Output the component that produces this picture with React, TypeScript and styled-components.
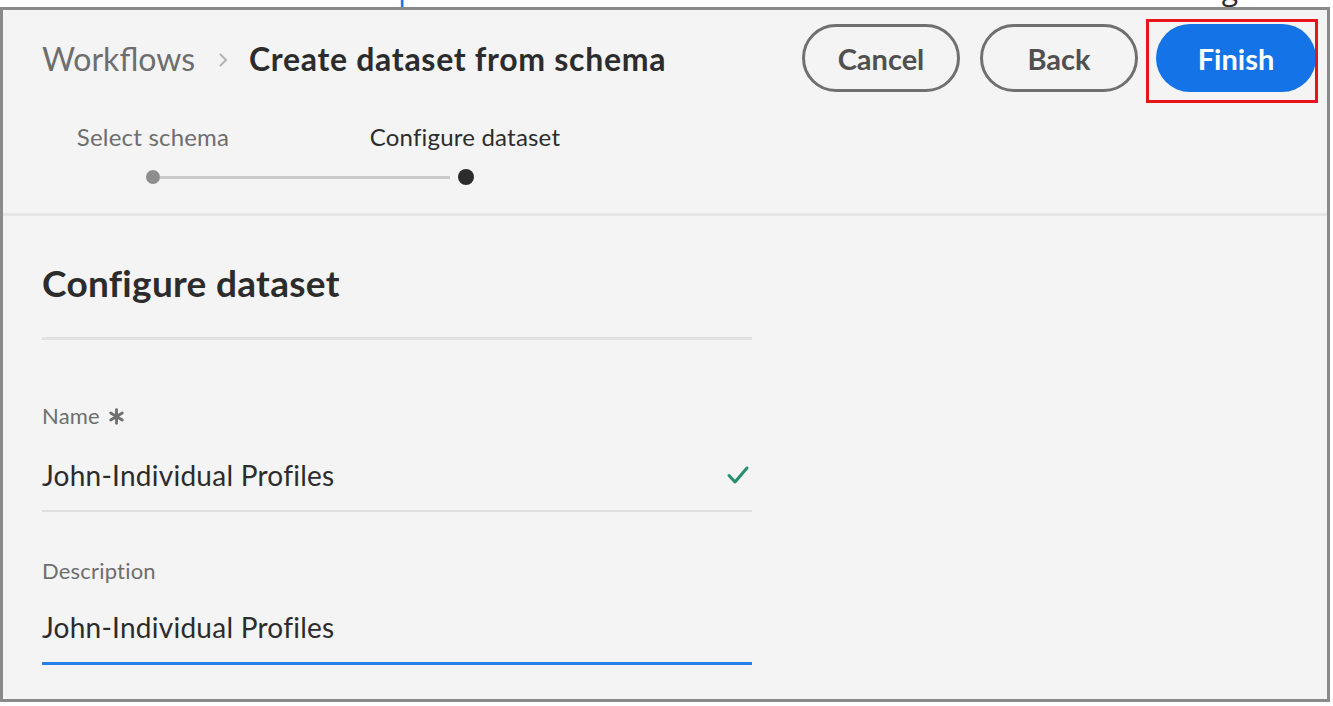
import styled, { createGlobalStyle } from "styled-components";

const GlobalStyle = createGlobalStyle`
  html, body {
    margin: 0;
    padding: 0;
    background: #ffffff;
  }
  body {
    font-family: Lato, "Open Sans", "Liberation Sans", sans-serif;
    color: #2c2c2c;
  }
`;

export default function App() {
  return (
    <>
      <GlobalStyle />
      <Page>
        <CaptionStrip>
          <CaptionText $color="#1473e6" $offset={338}>
            setup
          </CaptionText>
          <CaptionText $color="#2c2c2c" $offset={0} $right={95}>
            dialog
          </CaptionText>
        </CaptionStrip>
        <Frame>
          <Header>
            <Toolbar>
              <Breadcrumbs>
                <Crumb>Workflows</Crumb>
                <Chevron viewBox="0 0 10 16" aria-hidden>
                  <path d="M2 2l6 6-6 6" />
                </Chevron>
                <CurrentCrumb>Create dataset from schema</CurrentCrumb>
              </Breadcrumbs>
              <Actions>
                <OutlineButton>Cancel</OutlineButton>
                <OutlineButton>Back</OutlineButton>
                <Highlight>
                  <PrimaryButton>Finish</PrimaryButton>
                </Highlight>
              </Actions>
            </Toolbar>
            <Stepper>
              <StepLabels>
                <StepLabel $active={false}>Select schema</StepLabel>
                <StepLabel $active>Configure dataset</StepLabel>
              </StepLabels>
              <Track>
                <Dot $active={false} />
                <TrackLine />
                <Dot $active />
              </Track>
            </Stepper>
          </Header>
          <Body>
            <Form>
              <Heading>Configure dataset</Heading>
              <HeadingRule />
              <Field $gap={62} $valueGap={27}>
                <Label>
                  Name
                  <Required viewBox="0 0 20 20" aria-hidden>
                    <path d="M10 2v16M3.2 6l13.6 8M3.2 14l13.6-8" />
                  </Required>
                </Label>
                <ValueRow $focused={false}>
                  <Value>John-Individual Profiles</Value>
                  <Check viewBox="0 0 24 20" aria-hidden>
                    <path d="M3 10.5l6 6.5L21 3" />
                  </Check>
                </ValueRow>
              </Field>
              <Field $gap={45} $valueGap={24}>
                <Label>Description</Label>
                <ValueRow $focused>
                  <Value>John-Individual Profiles</Value>
                </ValueRow>
              </Field>
            </Form>
          </Body>
        </Frame>
      </Page>
    </>
  );
}

const Page = styled.div`
  width: 1333px;
  height: 706px;
  overflow: hidden;
  background: #ffffff;
`;

const CaptionStrip = styled.div`
  height: 7px;
  overflow: hidden;
  display: flex;
  align-items: flex-end;
`;

const CaptionText = styled.span<{ $color: string; $offset: number; $right?: number }>`
  font-family: "Open Sans", sans-serif;
  font-size: 30px;
  line-height: 30px;
  color: ${(p) => p.$color};
  margin-left: ${(p) => (p.$offset ? `${p.$offset}px` : "auto")};
  margin-right: ${(p) => (p.$right ? `${p.$right}px` : "0")};
  margin-bottom: 3px;
  flex-shrink: 0;
`;

const Frame = styled.div`
  width: 1330px;
  height: 695px;
  box-sizing: border-box;
  border: 3px solid #8a8a8a;
  background: #f4f4f4;
  overflow: hidden;
`;

const Header = styled.header`
  padding: 14px 11px 28px 39px;
  border-bottom: 3px solid #e6e6e6;
`;

const Toolbar = styled.div`
  display: flex;
  align-items: center;
  justify-content: space-between;
  height: 68px;
`;

const Breadcrumbs = styled.nav`
  display: flex;
  align-items: center;
  gap: 21px;
`;

const Crumb = styled.span`
  font-size: 32px;
  color: #6e6e6e;
`;

const CurrentCrumb = styled.span`
  font-size: 32px;
  font-weight: 700;
  color: #2c2c2c;
  letter-spacing: 0.7px;
`;

const Chevron = styled.svg`
  width: 10px;
  height: 16px;
  margin-top: 4px;
  margin-left: 2px;
  fill: none;
  stroke: #b3b3b3;
  stroke-width: 2;
`;

const Actions = styled.div`
  display: flex;
  align-items: center;
  gap: 20px;
`;

const pill = `
  height: 68px;
  width: 158px;
  box-sizing: border-box;
  border-radius: 34px;
  font-family: Lato, "Open Sans", sans-serif;
  font-size: 29px;
  font-weight: 700;
  display: flex;
  align-items: center;
  justify-content: center;
  cursor: pointer;
`;

const OutlineButton = styled.button`
  ${pill}
  background: transparent;
  border: 3px solid #707070;
  color: #505050;
`;

const PrimaryButton = styled.button`
  ${pill}
  width: 160px;
  background: #1473e6;
  border: none;
  color: #ffffff;
`;

const Highlight = styled.span`
  position: relative;
  display: inline-flex;
  margin-left: -2px;

  &::after {
    content: "";
    position: absolute;
    top: -5px;
    left: -10px;
    right: -2px;
    bottom: -11px;
    border: 3px solid #e8141b;
    pointer-events: none;
  }
`;

const Stepper = styled.div`
  margin-top: 30px;
  display: flex;
  flex-direction: column;
`;

const StepLabels = styled.div`
  display: flex;
  gap: 90px;
`;

const StepLabel = styled.span<{ $active: boolean }>`
  width: 222px;
  text-align: center;
  font-size: 24px;
  line-height: 30px;
  letter-spacing: 0.2px;
  color: ${(p) => (p.$active ? "#2c2c2c" : "#6e6e6e")};
`;

const Track = styled.div`
  display: flex;
  align-items: center;
  margin-top: 17px;
  margin-left: 104px;
  height: 16px;
`;

const Dot = styled.span<{ $active: boolean }>`
  width: ${(p) => (p.$active ? 16 : 14)}px;
  height: ${(p) => (p.$active ? 16 : 14)}px;
  border-radius: 50%;
  background: ${(p) => (p.$active ? "#2c2c2c" : "#8e8e8e")};
  flex-shrink: 0;
`;

const TrackLine = styled.span`
  width: 290px;
  height: 3px;
  background: #cacaca;
  margin-right: 8px;
`;

const Body = styled.main`
  padding: 45px 39px 0;
`;

const Form = styled.div`
  width: 710px;
`;

const Heading = styled.h2`
  margin: 0;
  font-size: 37px;
  line-height: 44px;
  font-weight: 700;
  color: #2c2c2c;
  letter-spacing: 0.3px;
`;

const HeadingRule = styled.hr`
  margin: 32px 0 0;
  border: none;
  height: 3px;
  background: #e1e1e1;
`;

const Field = styled.div<{ $gap: number; $valueGap: number }>`
  margin-top: ${(p) => p.$gap}px;
  display: flex;
  flex-direction: column;
  gap: ${(p) => p.$valueGap}px;
`;

const Label = styled.label`
  display: flex;
  align-items: center;
  gap: 8px;
  font-size: 22px;
  line-height: 28px;
  color: #6e6e6e;
  letter-spacing: 0.2px;
`;

const Required = styled.svg`
  width: 17px;
  height: 17px;
  fill: none;
  stroke: #707070;
  stroke-width: 3.4;
  stroke-linecap: round;
`;

const ValueRow = styled.div<{ $focused: boolean }>`
  display: flex;
  align-items: center;
  justify-content: space-between;
  padding-bottom: 17px;
  border-bottom: ${(p) => (p.$focused ? "3px solid #2680eb" : "2px solid #dedede")};
`;

const Value = styled.span`
  font-size: 28px;
  line-height: 36px;
  color: #2c2c2c;
  letter-spacing: 0.25px;
`;

const Check = styled.svg`
  width: 24px;
  height: 20px;
  margin-right: 2px;
  fill: none;
  stroke: #268e6c;
  stroke-width: 3;
  stroke-linecap: round;
  stroke-linejoin: round;
`;
